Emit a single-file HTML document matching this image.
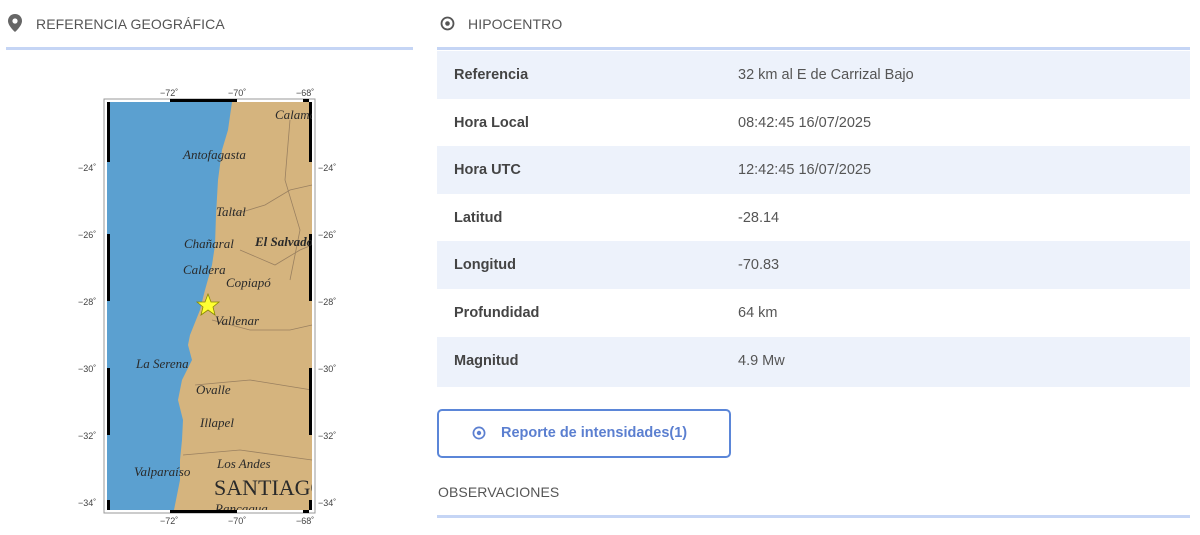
<!DOCTYPE html>
<html><head><meta charset="utf-8"><style>
body{margin:0;width:1200px;height:535px;background:#fff;font-family:"Liberation Sans",sans-serif;position:relative;overflow:hidden}
.h{position:absolute;font-size:14px;color:#555;letter-spacing:.1px}
.line{position:absolute;height:3px;background:#c5d5f5}
.row{position:absolute;left:437px;width:753px;height:47.6px;font-size:14.5px;color:#333}
.row.s{background:#edf2fb}
.row b{position:absolute;left:17px;top:16px;font-weight:bold;color:#444}
.row span{position:absolute;left:301px;top:16px;color:#555}
.ml{font-family:"Liberation Serif",serif;font-style:italic;fill:#2a2a2a;font-size:13px}
.tk{font-family:"Liberation Sans",sans-serif;font-size:9px;fill:#444}
</style></head><body>
<svg style="position:absolute;left:8px;top:14px" width="14" height="18" viewBox="0 0 14 18"><path d="M7 0C3 0 0 3 0 7c0 5 7 11 7 11s7-6 7-11c0-4-3-7-7-7z" fill="#666"/><circle cx="7" cy="7" r="2.6" fill="#fff"/></svg>
<div class="h" style="left:36px;top:16px">REFERENCIA GEOGRÁFICA</div>
<div class="line" style="left:6px;top:47px;width:407px"></div>
<svg style="position:absolute;left:440px;top:16px" width="15" height="15" viewBox="0 0 15 15"><circle cx="7.5" cy="7.5" r="6" fill="none" stroke="#555" stroke-width="1.8"/><circle cx="7.5" cy="7.5" r="2.3" fill="#555"/></svg>
<div class="h" style="left:468px;top:16px">HIPOCENTRO</div>
<div class="line" style="left:437px;top:47px;width:753px"></div>

<svg style="position:absolute;left:60px;top:80px" width="300" height="450" viewBox="60 80 300 450">
<defs><clipPath id="c"><rect x="107" y="102" width="205" height="408"/></clipPath></defs>
<rect x="104" y="99" width="211" height="414" fill="#fff" stroke="#999" stroke-width="1"/>
<rect x="107" y="102" width="205" height="408" fill="#5ba0d0"/>
<path d="M232 102 L228 130 L222 150 L218 180 L216 215 L215 245 L212 265 L205 290 L200 310 L190 335 L188 345 L192 360 L182 380 L178 400 L183 420 L182 440 L180 460 L180 480 L177 495 L174 510 L312 510 L312 102Z" fill="#d5b47e"/>
<g stroke="#9a8060" stroke-width="0.8" fill="none"><path d="M232 215 L265 205 L290 190 L312 185"/><path d="M240 250 L275 265 L300 250 L312 245"/><path d="M212 320 L250 330 L290 330 L312 325"/><path d="M195 385 L250 380 L312 390"/><path d="M183 455 L240 450 L312 460"/><path d="M290 120 L285 180 L300 230 L290 280"/></g>
<rect x="107" y="102" width="3" height="60" fill="#000"/><rect x="107" y="234" width="3" height="67" fill="#000"/><rect x="107" y="368" width="3" height="67" fill="#000"/><rect x="107" y="500" width="3" height="10" fill="#000"/>
<rect x="309" y="102" width="3" height="60" fill="#000"/><rect x="309" y="234" width="3" height="67" fill="#000"/><rect x="309" y="368" width="3" height="67" fill="#000"/><rect x="309" y="500" width="3" height="10" fill="#000"/>
<rect x="170" y="99" width="67" height="3" fill="#000"/><rect x="303" y="99" width="6" height="3" fill="#000"/>
<rect x="170" y="510" width="67" height="3" fill="#000"/><rect x="303" y="510" width="6" height="3" fill="#000"/>
<g class="tk"><text x="160" y="96">−72˚</text><text x="228" y="96">−70˚</text><text x="296" y="96">−68˚</text>
<text x="160" y="524">−72˚</text><text x="228" y="524">−70˚</text><text x="296" y="524">−68˚</text>
<text x="78" y="171">−24˚</text><text x="78" y="238">−26˚</text><text x="78" y="305">−28˚</text><text x="78" y="372">−30˚</text><text x="78" y="439">−32˚</text><text x="78" y="506">−34˚</text>
<text x="318" y="171">−24˚</text><text x="318" y="238">−26˚</text><text x="318" y="305">−28˚</text><text x="318" y="372">−30˚</text><text x="318" y="439">−32˚</text><text x="318" y="506">−34˚</text></g>
<g class="ml" clip-path="url(#c)"><text x="275" y="119">Calama</text><text x="183" y="159">Antofagasta</text><text x="216" y="216">Taltal</text><text x="184" y="248">Chañaral</text><text x="255" y="246" font-weight="bold">El Salvador</text><text x="183" y="274">Caldera</text><text x="226" y="287">Copiapó</text><text x="215" y="325">Vallenar</text><text x="136" y="368">La Serena</text><text x="196" y="394">Ovalle</text><text x="200" y="427">Illapel</text><text x="217" y="468">Los Andes</text><text x="134" y="476">Valparaíso</text><text x="214" y="495" font-size="22" style="font-style:normal">SANTIAGO</text><text x="215" y="513">Rancagua</text></g>
<polygon points="208,294 211,302 219,302 213,307 215,315 208,310 201,315 203,307 197,302 205,302" fill="#ffff33" stroke="#8a8a00" stroke-width="0.8"/>
</svg>

<div class="row s" style="top:51px"><b>Referencia</b><span>32 km al E de Carrizal Bajo</span></div>
<div class="row" style="top:98.6px"><b>Hora Local</b><span>08:42:45 16/07/2025</span></div>
<div class="row s" style="top:146.2px"><b>Hora UTC</b><span>12:42:45 16/07/2025</span></div>
<div class="row" style="top:193.8px"><b>Latitud</b><span>-28.14</span></div>
<div class="row s" style="top:241.4px"><b>Longitud</b><span>-70.83</span></div>
<div class="row" style="top:289px"><b>Profundidad</b><span>64 km</span></div>
<div class="row s" style="top:336.6px;height:50px"><b>Magnitud</b><span>4.9 Mw</span></div>

<div style="position:absolute;left:437px;top:409px;width:290px;height:45px;border:2px solid #5b86d8;border-radius:5px"></div>
<svg style="position:absolute;left:472px;top:426px" width="14" height="14" viewBox="0 0 14 14"><circle cx="7" cy="7" r="5.6" fill="none" stroke="#5b7fd0" stroke-width="1.7"/><circle cx="7" cy="7" r="2.2" fill="#5b7fd0"/></svg>
<div style="position:absolute;left:501px;top:425px;font-size:14.5px;font-weight:bold;color:#5b7fd0">Reporte de intensidades(1)</div>
<div class="h" style="left:438px;top:484px">OBSERVACIONES</div>
<div class="line" style="left:437px;top:515px;width:753px"></div>
</body></html>
